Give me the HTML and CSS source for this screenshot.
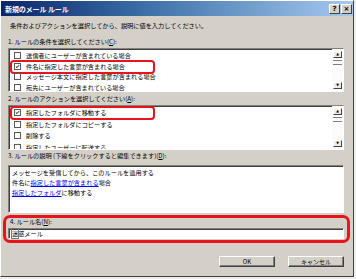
FILE: index.html
```html
<!DOCTYPE html>
<html lang="ja">
<head>
<meta charset="utf-8">
<title>新規のメール ルール</title>
<link rel="stylesheet" href="styles.css">
</head>
<body>
<div class="dialog">
  <div class="titlebar">
    <span class="title">新規のメール ルール</span>
    <div class="tbtns">
      <span class="tbtn">?</span>
      <span class="tbtn">×</span>
    </div>
  </div>
  <div class="content">
    <p class="intro">条件およびアクションを選択してから、説明に値を入力してください。</p>

    <p class="lbl lbl1">1. ルールの条件を選択してください(<u>C</u>):</p>
    <div class="listbox list1">
      <ul class="items">
        <li><span class="cb"></span>送信者にユーザーが含まれている場合</li>
        <li class="marked"><span class="cb checked"><svg viewBox="0 0 7 7"><path d="M1.2 3.4 L2.8 5 L5.8 1.6" fill="none" stroke="#000" stroke-width="1.3"/></svg></span>件名に指定した言葉が含まれる場合<span class="mark"></span></li>
        <li><span class="cb"></span>メッセージ本文に指定した言葉が含まれる場合</li>
        <li><span class="cb"></span>宛先にユーザーが含まれている場合</li>
      </ul>
      <div class="scrollbar">
        <span class="sbtn">▲</span>
        <span class="thumb"></span>
        <span class="track"></span>
        <span class="sbtn">▼</span>
      </div>
    </div>

    <p class="lbl lbl2">2. ルールのアクションを選択してください(<u>A</u>):</p>
    <div class="listbox list2">
      <ul class="items">
        <li class="marked"><span class="cb checked"><svg viewBox="0 0 7 7"><path d="M1.2 3.4 L2.8 5 L5.8 1.6" fill="none" stroke="#000" stroke-width="1.3"/></svg></span>指定したフォルダに移動する<span class="mark"></span></li>
        <li><span class="cb"></span>指定したフォルダにコピーする</li>
        <li><span class="cb"></span>削除する</li>
        <li><span class="cb"></span>指定したユーザーに転送する</li>
      </ul>
      <div class="scrollbar">
        <span class="sbtn">▲</span>
        <span class="thumb"></span>
        <span class="track"></span>
        <span class="sbtn">▼</span>
      </div>
    </div>

    <p class="lbl lbl3">3. ルールの説明 (下線をクリックすると編集できます)(<u>D</u>):</p>
    <div class="descbox">
      <p>メッセージを受信してから、このルールを適用する</p>
      <p>件名に<a href="#">指定した言葉が含まれる</a>場合</p>
      <p><a href="#">指定したフォルダ</a>に移動する</p>
    </div>

    <div class="field4">
      <p class="lbl lbl4">4. ルール名(<u>N</u>):</p>
      <div class="input"><span class="caret">迷</span>惑メール</div>
      <span class="mark mark4"></span>
    </div>

    <div class="buttons">
      <span class="btn">OK</span>
      <span class="btn">キャンセル</span>
    </div>
  </div>
</div>
</body>
</html>
```

FILE: styles.css
```css
* { box-sizing: border-box; margin: 0; padding: 0; }

html, body {
  width: 356px;
  height: 279px;
  overflow: hidden;
  background: #eeeeee;
}

body {
  font-family: "Noto Sans CJK JP", "Noto Sans", sans-serif;
  font-size: 6.2px;
  color: #000;
}

.dialog {
  width: 354px;
  height: 277px;
  background: #d4d0c8;
  border: 1px solid;
  border-color: #ffffff #404040 #404040 #ffffff;
  display: flex;
  flex-direction: column;
}

.titlebar {
  height: 15px;
  background: linear-gradient(to right, #0a246a 0%, #3a6ea5 40%, #a6caf0 100%);
  display: flex;
  align-items: center;
  justify-content: space-between;
  padding: 0 1px 0 4px;
  flex: none;
}

.title {
  color: #fff;
  font-weight: bold;
  font-size: 7px;
  letter-spacing: -0.1px;
}

.tbtns { display: flex; gap: 1px; }

.tbtn {
  width: 11px;
  height: 10px;
  background: #d4d0c8;
  border: 1px solid;
  border-color: #ffffff #404040 #404040 #ffffff;
  font-family: "DejaVu Sans", sans-serif;
  font-weight: bold;
  font-size: 7px;
  line-height: 8px;
  text-align: center;
}

.content {
  display: flex;
  flex-direction: column;
  padding: 0 9px 0 7px;
}

.intro { margin-top: 4px; line-height: 11px; padding-left: 2px; }

.lbl { line-height: 10px; }
.lbl1 { margin-top: 6px; }
.lbl2 { margin-top: 2px; }
.lbl3 { margin-top: 1px; }
.lbl4 { margin-top: 0; padding-left: 2px; }

.listbox {
  margin-top: 1px;
  background: #fff;
  border: 1px solid;
  border-color: #808080 #ffffff #ffffff #808080;
  box-shadow: inset 1px 1px 0 #404040;
  display: flex;
  overflow: hidden;
}

.list1 { height: 44px; }
.list2 { height: 45px; }

.items {
  list-style: none;
  flex: 1;
  overflow: hidden;
}

.list1 .items { padding-top: 1.5px; }
.list2 .items { padding-top: 1px; }

.items li {
  position: relative;
  display: flex;
  align-items: center;
  gap: 5px;
  padding-left: 5px;
  white-space: nowrap;
}

.list1 .items li { height: 10.5px; }
.list2 .items li { height: 11.5px; }

.cb {
  width: 7px;
  height: 7px;
  flex: none;
  background: #fff;
  border: 1px solid #5a5a5a;
  display: flex;
}

.cb svg { width: 100%; height: 100%; }

.mark {
  position: absolute;
  border: 2.5px solid #e8141c;
  border-radius: 4px;
  pointer-events: none;
}

.items .mark {
  left: 1px;
  top: -1px;
  width: 145px;
  height: 14px;
}

.scrollbar {
  width: 11px;
  flex: none;
  display: flex;
  flex-direction: column;
  padding: 2px 1px 2px 1px;
  background: #fbfbfb;
}

.sbtn {
  height: 7px;
  flex: none;
  background: #ecebe6;
  border: 1px solid;
  border-color: #ffffff #404040 #404040 #ffffff;
  font-family: "DejaVu Sans", sans-serif;
  font-size: 3.5px;
  line-height: 5px;
  text-align: center;
}

.thumb {
  height: 5px;
  margin-top: 2px;
  border-top: 1px solid #808080;
  border-bottom: 1px solid #808080;
}

.track { flex: 1; }

.descbox {
  margin-top: 4px;
  height: 48px;
  background: #fff;
  border: 1px solid;
  border-color: #808080 #ffffff #ffffff #808080;
  box-shadow: inset 1px 1px 0 #404040;
  padding: 2px 3px;
}

.descbox p { line-height: 10px; white-space: nowrap; }

.descbox a { color: #0000ee; text-decoration: underline; }

.field4 {
  position: relative;
  margin-top: 4px;
}

.input {
  margin-top: 1px;
  height: 11px;
  background: #fff;
  border: 1px solid;
  border-color: #808080 #ffffff #ffffff #808080;
  box-shadow: inset 1px 1px 0 #404040;
  padding-left: 3px;
  line-height: 9px;
}

.caret { outline: 1px solid #777; outline-offset: -0.5px; }

.mark4 {
  top: -2px;
  left: -5px;
  right: -6px;
  bottom: -4px;
  border-width: 3px;
  border-radius: 7px;
}

.buttons {
  margin-top: 17px;
  display: flex;
  justify-content: flex-end;
  gap: 13px;
}

.btn {
  width: 56px;
  height: 11px;
  background: #d4d0c8;
  border: 1px solid;
  border-color: #ffffff #404040 #404040 #ffffff;
  box-shadow: inset -1px -1px 0 #808080;
  text-align: center;
  line-height: 9px;
  font-size: 6px;
}
```
